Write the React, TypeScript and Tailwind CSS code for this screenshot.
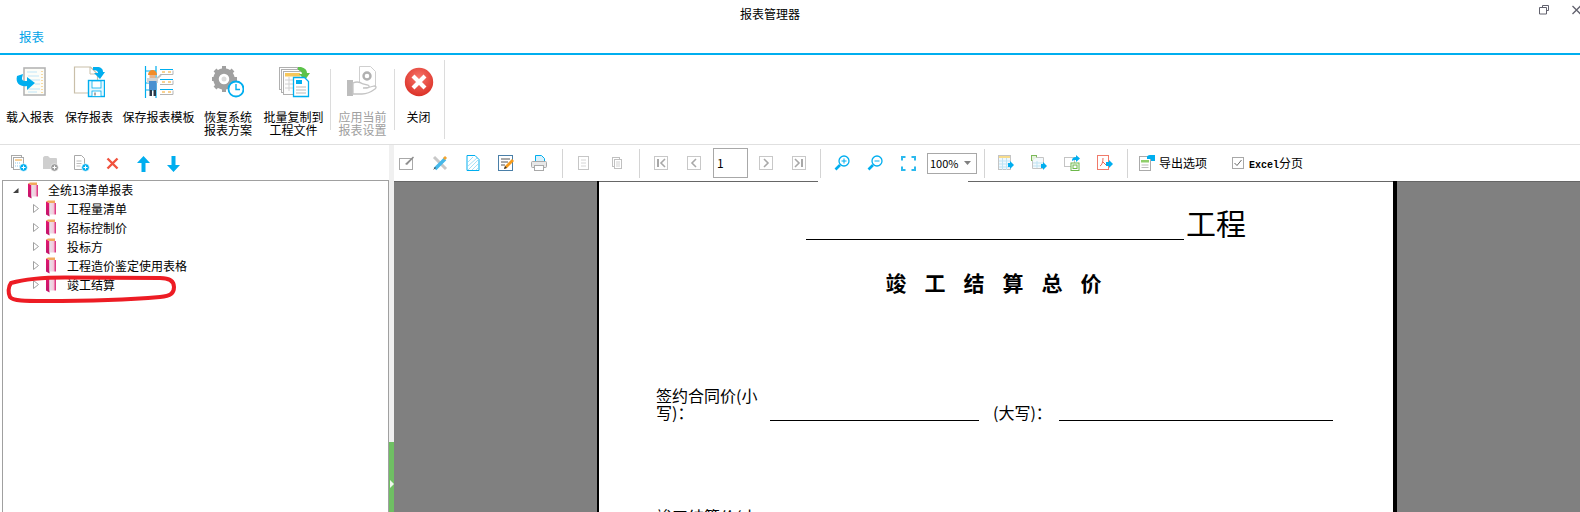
const cn = "#00aeef";
const gr = "#a9a9a9";

const Sep = ({ className = "" }: { className?: string }) => (
  <div className={`w-px h-[29px] bg-[#d4d4d4] ${className}`} />
);

// ribbon icons
const LoadIcon = () => (
  <svg width="32" height="32" viewBox="0 0 32 32">
    <rect x="10" y="2" width="21" height="27" fill="#fdfdf8" stroke="#b5b5b5" strokeWidth="1.600" />
    <path d="M13 6h10M14 10h11M16 14h10M21 18h5M14 23h12M14 26h9" stroke="#bfe6f7" strokeWidth="1.200" />
    <path d="M28 5v22" stroke="#f5b84a" strokeWidth="1" strokeDasharray="1 2" />
    <path d="M3 10l6-2-1 4c0 3 2 3 5 3v-4l8 6-8 7v-4C7 21 1 18 3 10z" fill={cn} />
  </svg>
);
const SaveIcon = () => (
  <svg width="32" height="32" viewBox="0 0 32 32">
    <path d="M1.500 1h16l7 7v19h-23z" fill="#fff" stroke="#c9bfa9" strokeWidth="1.200" />
    <path d="M17 1v7h7" fill="none" stroke="#c9bfa9" />
    <rect x="15.500" y="14.500" width="16" height="16" fill="#e9f8fe" stroke={cn} strokeWidth="1.400" />
    <rect x="19" y="15" width="9" height="7" fill="#fff" stroke={cn} strokeWidth=".8" />
    <rect x="19" y="25" width="9" height="5.500" fill="#fff" stroke={cn} strokeWidth=".8" />
    <rect x="21" y="26.500" width="2" height="3" fill={gr} />
    <path d="M20 1h4c4 0 6 2 6 5h2l-5 7-6-6h4c0-2-2-3-5-3z" fill={cn} />
  </svg>
);
const TemplateIcon = () => (
  <svg width="32" height="32" viewBox="0 0 32 32">
    <path d="M2.500 0v32M13 0v32M2 5h11M2 17h11M2 24h11" stroke={cn} strokeWidth="1.200" />
    <g fill="#fff">
      <path d="M17 3h13v5H17z" />
      <path d="M17 14h13v5H17z" />
      <path d="M17 24h13v5H17z" />
    </g>
    <path d="M17 3.500h13M17 13.500h13M17 23.500h13" stroke={cn} />
    <path d="M17 8.500h13v-4M17 18.500h13v-4M17 28.500h13v-4" fill="none" stroke="#b5b5b5" />
    <path d="M19 6h3M25 6h3M19 16h3M25 16h3M19 26h3M25 26h3" stroke="#f5a623" strokeWidth="1.200" />
    <path d="M12 14l6-5" stroke="#c4c4c4" strokeWidth="2" />
    <path d="M5 9c0-3 2-5 4.500-5S14 6 14 9z" fill="#f28c28" />
    <rect x="6.500" y="9" width="6" height="3" fill="#e8b48a" />
    <rect x="4" y="12" width="11" height="5" fill="#d4d4d4" />
    <rect x="6" y="15" width="7.500" height="9" fill="#4a90d0" />
    <rect x="6.500" y="24" width="2.500" height="6" fill="#2b3a4a" />
    <rect x="10.500" y="24" width="2.500" height="6" fill="#2b3a4a" />
  </svg>
);
const RestoreIcon = () => (
  <svg width="32" height="32" viewBox="0 0 32 32">
    <circle cx="12" cy="13" r="8" fill="none" stroke="#a0a0a0" strokeWidth="5.500" />
    <g stroke="#a0a0a0" strokeWidth="4">
      <path d="M12 0v4M12 22v4M-1 13h4M21 13h4M3 4l3 3M18 19l3 3M21 4l-3 3M6 19l-3 3" />
    </g>
    <circle cx="12" cy="13" r="2.500" fill="#dcdcdc" />
    <circle cx="24" cy="23" r="7.500" fill="#fff" stroke={cn} strokeWidth="1.800" />
    <path d="M24 18v5.500h4" fill="none" stroke={cn} strokeWidth="1.400" />
  </svg>
);
const BatchIcon = () => (
  <svg width="32" height="32" viewBox="0 0 32 32">
    <rect x="1.500" y="1.500" width="18" height="22" fill="#fff" stroke="#b0b0b0" />
    <rect x="3.500" y="3.500" width="18" height="23" fill="#fff" stroke="#b0b0b0" />
    <rect x="5.500" y="5.500" width="19" height="23" fill="#fdfdfd" stroke="#b0b0b0" />
    <rect x="7" y="7" width="15" height="3.500" fill="#f7c75a" />
    <path d="M7 14h14M7 18h10M7 22h8M11 11v14" stroke="#d0d0d0" />
    <path d="M20 1h3c4 1 6 3 6 6h3l-5 7-6-6h3c0-2-2-4-4-4z" fill="#5cc24a" />
    <path d="M15.500 11.500h11l4 4v15h-15z" fill="#fff" stroke={cn} strokeWidth="1.300" />
    <rect x="18" y="14" width="6" height="4" fill={cn} />
    <path d="M18 21h10M18 24h10M18 27h10" stroke="#b9b9b9" />
  </svg>
);
const ApplyIcon = () => (
  <svg width="32" height="32" viewBox="0 0 32 32">
    <path d="M12.500 .5h11l5 5v16h-16z" fill="#fff" stroke="#cfcfcf" />
    <circle cx="20" cy="10" r="3.500" fill="none" stroke="#b0b0b0" strokeWidth="2.400" />
    <rect x="0" y="14" width="6" height="16" fill="#bdbdbd" />
    <path d="M6 17c4-2 7-1 10 1l5 1c2 1 1 3-1 3h-4c3 0 8-1 11-2 2 0 3 1 1 3-4 3-9 5-13 5H6z" fill="#fff" stroke="#c4c4c4" strokeWidth="1.300" />
  </svg>
);
const CloseIcon = () => (
  <svg width="30" height="30" viewBox="0 0 30 30">
    <defs>
      <radialGradient id="closeRed" cx="50%" cy="35%" r="70%">
        <stop offset="0%" stopColor="#f7756b" />
        <stop offset="100%" stopColor="#d92c22" />
      </radialGradient>
    </defs>
    <circle cx="15" cy="15" r="14.200" fill="url(#closeRed)" />
    <path d="M9 9l12 12M21 9L9 21" stroke="#fff" strokeWidth="4.200" />
  </svg>
);

// left toolbar
const PlusBadge = ({ color = cn }: { color?: string }) => (
  <g>
    <circle cx="12.500" cy="12.500" r="3.800" fill={color} stroke="#fff" strokeWidth=".6" />
    <path d="M10.500 12.500h4M12.500 10.500v4" stroke="#fff" />
  </g>
);
const NewGroupIcon = () => (
  <svg width="17" height="17" viewBox="0 0 17 17">
    <rect x=".5" y=".5" width="10" height="12" fill="#fff" stroke={gr} />
    <rect x="2.500" y="2.500" width="10" height="12" fill="#fff" stroke={gr} />
    <path d="M4 5h7" stroke="#f0a030" />
    <path d="M4 8h6M4 11h5" stroke="#8cc8ea" strokeDasharray="1 1" />
    <PlusBadge />
  </svg>
);
const NewFolderIcon = () => (
  <svg width="17" height="17" viewBox="0 0 17 17">
    <path d="M1 3c0-1 1-2 2-2h3l2 2h6c1 0 1 1 1 1v10H1z" fill="#cfcfcf" />
    <PlusBadge color="#9c9c9c" />
  </svg>
);
const NewFileIcon = () => (
  <svg width="17" height="17" viewBox="0 0 17 17">
    <path d="M1.500 .5h7l3 3v11h-10z" fill="#fff" stroke={gr} />
    <path d="M3.500 6h5M3.500 8.500h5M3.500 11h4" stroke="#bcbcbc" />
    <PlusBadge />
  </svg>
);
const XIcon = () => (
  <svg width="13" height="13" viewBox="0 0 13 13">
    <path d="M1.500 1.500l10 10M11.500 1.500l-10 10" stroke="#f0533f" strokeWidth="2.400" />
  </svg>
);
const UpIcon = () => (
  <svg width="15" height="16" viewBox="0 0 15 16">
    <path d="M7.500 0L14 7h-4.500v9h-4V7H1z" fill={cn} />
  </svg>
);
const DownIcon = () => (
  <svg width="15" height="16" viewBox="0 0 15 16">
    <path d="M7.500 16L14 9h-4.500V0h-4v9H1z" fill={cn} />
  </svg>
);

// viewer toolbar
const Ico = ({ children }: { children: React.ReactNode }) => (
  <svg width="16" height="16" viewBox="0 0 16 16">
    {children}
  </svg>
);
const EditIcon = () => (
  <Ico>
    <rect x=".5" y="3.500" width="13" height="11" fill="#fff" stroke={gr} />
    <path d="M6 9l8-7.500 1 1L8 10z" fill="#8f8f8f" />
  </Ico>
);
const ToolIcon = () => (
  <Ico>
    <path d="M2 2l12 12" stroke="#c8c8c8" strokeWidth="3" />
    <path d="M3 14L13 4" stroke="#45b8ea" strokeWidth="3.500" />
    <path d="M12 2l2 2" stroke="#f2a430" strokeWidth="3" />
    <path d="M1 15l2-3 1 1z" fill="#444" />
  </Ico>
);
const HatchIcon = () => (
  <Ico>
    <path d="M2 .5h8l4 4v11H2z" fill="#fff" stroke={cn} />
    <path d="M3 7l5-5M3 11l9-8M3 15l10-10M7 15l6-6M11 15l2-2" stroke="#a6e0f6" />
  </Ico>
);
const NoteIcon = () => (
  <Ico>
    <rect x=".5" y=".5" width="14" height="15" fill="#fff" stroke="#4a7fa8" />
    <path d="M3 4h9M3 7h7M3 10h4" stroke="#555" />
    <path d="M6 14l1-3 7-7 2 2-7 7z" fill="#f59a1b" />
    <path d="M6 14l1-3 2 2z" fill="#333" />
  </Ico>
);
const PrintIcon = () => (
  <Ico>
    <path d="M4.500 .5h6l3 3v6h-9z" fill="#d9f1fb" stroke={cn} />
    <rect x=".5" y="6.500" width="15" height="6" rx="1" fill="#e8e8e8" stroke={gr} />
    <rect x="3.500" y="10.500" width="9" height="5" fill="#fff" stroke={gr} />
  </Ico>
);
const PageIcon = () => (
  <Ico>
    <rect x="2.500" y="1.500" width="10" height="13" fill="#fff" stroke="#c6c6c6" />
    <path d="M5 5h5M5 8h5M5 11h5" stroke="#d6d6d6" />
  </Ico>
);
const PagesIcon = () => (
  <Ico>
    <rect x="3.500" y="2.500" width="7" height="9" fill="#fff" stroke="#c0c0c0" />
    <rect x="5.500" y="4.500" width="7" height="9" fill="#fff" stroke="#c0c0c0" />
    <path d="M7 7h4M7 9h4M7 11h4" stroke="#d0d0d0" />
  </Ico>
);
const NavIcon = ({ d, bar }: { d: string; bar?: number }) => (
  <Ico>
    <rect x="1.500" y="1.500" width="13" height="13" fill="#fff" stroke="#c8c8c8" />
    <path d={d} fill="none" stroke="#a8a8a8" strokeWidth="1.600" />
    {bar !== undefined && <rect x={bar} y="4" width="2" height="8" fill="#a8a8a8" />}
  </Ico>
);
const ZoomIcon = ({ plus }: { plus?: boolean }) => (
  <Ico>
    <circle cx="10" cy="6" r="5" fill="#fff" stroke={cn} strokeWidth="1.300" />
    <path d="M7.500 6h5" stroke={cn} />
    {plus && <path d="M10 3.500v5" stroke={cn} />}
    <path d="M6 10l-4.500 4.500" stroke={cn} strokeWidth="2.600" />
  </Ico>
);
const FitIcon = () => (
  <svg width="15" height="15" viewBox="0 0 15 15">
    <path d="M1 4.500V1h3.500M10.500 1H14v3.500M14 10.500V14h-3.500M4.500 14H1v-3.500" fill="none" stroke="#2bb9ee" strokeWidth="2" />
  </svg>
);
const ExcelIcon = () => (
  <Ico>
    <rect x=".5" y=".5" width="12" height="14" fill="#f0f8fd" stroke="#c4c4c4" />
    <rect x="1" y="1" width="11" height="2" fill="#f7dc8c" />
    <path d="M1 6h11M1 9h11M1 12h11M4.500 3v12M8.500 3v12" stroke="#bfe3f3" />
    <path d="M10 8h2V6l4 4-4 4v-2h-2z" fill={cn} />
  </Ico>
);
const ExcelPageIcon = () => (
  <Ico>
    <rect x=".5" y=".5" width="5" height="5" fill="#e5f2dc" stroke="#7cb95b" />
    <path d="M5.500 2.500h7v11h-11v-8" fill="#f4f9fc" stroke="#c4c4c4" />
    <path d="M2 8h10M2 11h10M6 6v7" stroke="#bfe3f3" />
    <path d="M10 9h2V7l4 4-4 4v-2h-2z" fill={cn} />
  </Ico>
);
const WordIcon = () => (
  <Ico>
    <rect x=".5" y="2.500" width="10" height="9" fill="#fff" stroke="#c4c4c4" />
    <rect x="7" y="8" width="8" height="7.500" fill="#fff" stroke="#6cb84a" />
    <rect x="9" y="10" width="4" height="3.500" fill="none" stroke="#6cb84a" />
    <path d="M8 5c0-2 2-3 4-3V0l4 3.500L12 7V5c-2 0-3 0-4 1z" fill={cn} />
  </Ico>
);
const PdfIcon = () => (
  <Ico>
    <rect x=".5" y=".5" width="11" height="14" fill="#fff" stroke="#f07a6a" />
    <path d="M3 11c2-1 3-4 3-8M6 7l3 3" stroke="#ee6a58" fill="none" />
    <path d="M9 7h3V5l4 4-4 4v-2H9z" fill={cn} />
  </Ico>
);
const OptionIcon = () => (
  <Ico>
    <rect x=".5" y="1.500" width="11" height="14" fill="#fff" stroke="#aaa" />
    <rect x="2" y="5" width="8" height="2.500" fill="#8fce6a" />
    <path d="M2.500 10h7M2.500 12.500h7" stroke="#bbb" />
    <path d="M8 4V2c0-1 1-2 3-2h5v6h-4V4z" fill={cn} />
  </Ico>
);

const Book = () => (
  <svg width="12" height="17" viewBox="0 0 12 17" className="shrink-0">
    <defs>
      <linearGradient id="bookFill" x1="0" x2="1" y1="0" y2="0">
        <stop offset="0%" stopColor="#e4e4ea" />
        <stop offset="60%" stopColor="#f6c9dc" />
        <stop offset="100%" stopColor="#d81b72" />
      </linearGradient>
      <linearGradient id="bookSide" x1="0" x2="0" y1="0" y2="1">
        <stop offset="0%" stopColor="#e2176f" />
        <stop offset="100%" stopColor="#c0146a" />
      </linearGradient>
    </defs>
    <path d="M1 1.500l3.500 1.500v13.500L1 14.500z" fill="url(#bookSide)" />
    <path d="M4.500 3h6.500v11.500H4.500z" fill="url(#bookFill)" />
    <path d="M1 1.500l2-1h7v2.500H4.500z" fill="#f2a85c" />
  </svg>
);

const TreeRow = ({ label, root }: { label: string; root?: boolean }) => (
  <div className={`flex items-center ${root ? "h-[18px] pl-[9px]" : "h-[19px] pl-[29px]"}`}>
    <svg width="8" height="9" viewBox="0 0 8 9" className="shrink-0">
      {root ? (
        <path d="M6.500 2v5H1z" fill="#404040" />
      ) : (
        <path d="M1.500 .5l5 4-5 4z" fill="#fff" stroke="#a0a0a0" />
      )}
    </svg>
    <div className={root ? "ml-[7px]" : "ml-[5px]"}>
      <Book />
    </div>
    <span className={`text-black ${root ? "ml-[9px]" : "ml-[10px]"}`}>{label}</span>
  </div>
);

const RibbonBtn = ({ w, icon, lines, off }: { w: string; icon: React.ReactNode; lines: string[]; off?: boolean }) => (
  <div className={`flex flex-col items-center pt-[11px] ${w}`}>
    <div className="h-[32px] flex items-center">{icon}</div>
    <div className={`mt-[12px] text-center leading-[13px] ${off ? "text-[#a0a0a0]" : "text-black"}`}>
      {lines.map((l) => (
        <div key={l}>{l}</div>
      ))}
    </div>
  </div>
);

const Slot = ({ children }: { children: React.ReactNode }) => (
  <div className="w-[26px] flex justify-center">{children}</div>
);
const Group = ({ children, className = "" }: { children: React.ReactNode; className?: string }) => (
  <div className={`flex items-center gap-[7px] ${className}`}>{children}</div>
);

export default function App() {
  return (
    <div className="relative w-[1580px] h-[512px] overflow-hidden bg-white flex flex-col text-[12px] font-['Noto_Sans_CJK_SC','Liberation_Sans',sans-serif]">
      {/* title bar */}
      <div className="h-[27px] relative flex items-center justify-center text-black">
        <span className="ml-[-40px]">报表管理器</span>
        <div className="absolute right-0 top-[3px] flex items-start">
          <svg width="10" height="10" viewBox="0 0 10 10" className="mr-[23px] mt-[2px]">
            <path d="M3.500 2.500V.5h6v5h-2M.5 2.500h7v6.500h-7z" fill="none" stroke="#62626e" />
          </svg>
          <svg width="8" height="10" viewBox="0 0 8 10" className="mt-[2px]">
            <path d="M.5 1l8 8M8.500 1l-8 8" stroke="#62626e" strokeWidth="1.300" />
          </svg>
        </div>
      </div>

      {/* tab strip */}
      <div className="h-[28px] flex items-start border-b-2 border-[#00aeef]">
        <div className="w-[65px] h-[27px] border-b-[1px] border-[#00aeef] flex justify-center pt-px pr-[2px]">
          <span className="text-[#00a3e8] text-[12.500px]">报表</span>
        </div>
      </div>

      {/* ribbon */}
      <div className="h-[90px] border-b border-[#e0e0e0] flex shrink-0">
        <RibbonBtn w="w-[60px]" icon={<LoadIcon />} lines={["载入报表"]} />
        <RibbonBtn w="w-[58px]" icon={<SaveIcon />} lines={["保存报表"]} />
        <RibbonBtn w="w-[81px]" icon={<TemplateIcon />} lines={["保存报表模板"]} />
        <RibbonBtn w="w-[58px]" icon={<RestoreIcon />} lines={["恢复系统", "报表方案"]} />
        <RibbonBtn w="w-[73px]" icon={<BatchIcon />} lines={["批量复制到", "工程文件"]} />
        <div className="w-px h-[61px] mt-[14px] bg-[#dcdcdc]" />
        <RibbonBtn w="w-[63px]" icon={<ApplyIcon />} lines={["应用当前", "报表设置"]} off />
        <div className="w-px h-[61px] mt-[14px] bg-[#dcdcdc]" />
        <div className="w-[49px] pr-[2px]">
          <RibbonBtn w="w-full" icon={<CloseIcon />} lines={["关闭"]} />
        </div>
        <div className="w-px h-[79px] mt-[5px] bg-[#dcdcdc]" />
      </div>

      {/* body */}
      <div className="flex-1 flex min-h-0">
        <div className="w-[389px] flex flex-col shrink-0">
          <div className="h-[35px] flex items-center pl-[11px] pt-[2px] gap-[14px] shrink-0">
            <NewGroupIcon />
            <NewFolderIcon />
            <NewFileIcon />
            <div className="ml-[2px] mr-[3px]">
              <XIcon />
            </div>
            <UpIcon />
            <div className="ml-[1px]">
              <DownIcon />
            </div>
          </div>
          <div className="flex-1 ml-[2px] border border-[#a0a0a0] border-b-0">
            <TreeRow root label="全统13清单报表" />
            <TreeRow label="工程量清单" />
            <TreeRow label="招标控制价" />
            <TreeRow label="投标方" />
            <TreeRow label="工程造价鉴定使用表格" />
            <TreeRow label="竣工结算" />
          </div>
        </div>

        {/* splitter */}
        <div className="w-[5px] shrink-0 flex flex-col bg-[#f0f0f0] relative">
          <div className="flex-1" />
          <div className="h-[70px] bg-[#6fbf63] relative">
            <svg width="4" height="8" viewBox="0 0 4 8" className="absolute left-[1px] top-[38px]">
              <path d="M0 0l4 4-4 4z" fill="#eef8ec" />
            </svg>
          </div>
        </div>

        {/* report viewer */}
        <div className="flex-1 flex flex-col min-w-0">
          <div className="h-[36px] flex items-center shrink-0">
            <Group>
              <Slot><EditIcon /></Slot>
              <Slot><ToolIcon /></Slot>
              <Slot><HatchIcon /></Slot>
              <Slot><NoteIcon /></Slot>
              <Slot><PrintIcon /></Slot>
            </Group>
            <Sep className="ml-[10px]" />
            <Group className="ml-[8px]">
              <Slot><PageIcon /></Slot>
              <Slot><PagesIcon /></Slot>
            </Group>
            <Sep className="ml-[9px]" />
            <Group className="ml-[8px]">
              <Slot><NavIcon d="M12 4L8 8l4 4" bar={4} /></Slot>
              <Slot><NavIcon d="M10 4L6 8l4 4" /></Slot>
            </Group>
            <div className="ml-[6px] w-[35px] h-[30px] border border-[#a8a8a8] flex items-center pl-[3px] text-black">1</div>
            <Group className="ml-[5px]">
              <Slot><NavIcon d="M6 4l4 4-4 4" /></Slot>
              <Slot><NavIcon d="M4 4l4 4-4 4" bar={10} /></Slot>
            </Group>
            <Sep className="ml-[8px]" />
            <Group className="ml-[8px]">
              <Slot><ZoomIcon plus /></Slot>
              <Slot><ZoomIcon /></Slot>
              <Slot><FitIcon /></Slot>
            </Group>
            <div className="ml-[6px] w-[50px] h-[21px] border border-[#a8a8a8] flex items-center justify-between pl-[2px] pr-[5px] text-black text-[11px]">
              <span>100%</span>
              <svg width="7" height="4" viewBox="0 0 7 4">
                <path d="M0 0h7L3.500 4z" fill="#808080" />
              </svg>
            </div>
            <Sep className="ml-[7px]" />
            <Group className="ml-[8px]">
              <Slot><ExcelIcon /></Slot>
              <Slot><ExcelPageIcon /></Slot>
              <Slot><WordIcon /></Slot>
              <Slot><PdfIcon /></Slot>
            </Group>
            <Sep className="ml-[9px]" />
            <div className="ml-[11px]"><OptionIcon /></div>
            <span className="ml-[4px] text-black">导出选项</span>
            <div className="ml-[25px] w-[12px] h-[12px] border border-[#a8a8a8] flex items-center justify-center">
              <svg width="8" height="8" viewBox="0 0 8 8">
                <path d="M.5 4l2.500 2.500L7.500 1" fill="none" stroke="#666" />
              </svg>
            </div>
            <span className="ml-[5px] text-black">
              <span className="font-['Liberation_Mono',monospace] font-bold text-[10px]">Excel</span>分页
            </span>
          </div>

          {/* preview area */}
          <div className="flex-1 flex bg-[#808080] min-h-0 border-t border-[#666666]">
            <div className="ml-[203px] w-[800px] bg-white border-l-2 border-r-4 border-black overflow-hidden -mt-px relative z-10 text-black">
              <div className="flex h-px">
                <div className="w-[219px] bg-[#666666]" />
                <div className="flex-1" />
                <div className="w-[425px] bg-[#666666]" />
              </div>
              <div className="pl-[207px] pt-[23px] flex items-end h-[58px]">
                <div className="w-[378px] border-b border-black" />
                <span className="text-[30px] leading-[34px] ml-[2px] mb-[1px]">工程</span>
              </div>
              <div className="mt-[28px] text-center font-bold text-[21px] leading-[28px] tracking-[18px] pl-[13px]">竣工结算总价</div>
              <div className="mt-[91px] ml-[57px] flex items-end">
                <div className="w-[110px] text-[16px] leading-[17px]">签约合同价(小写)：</div>
                <div className="ml-[4px] w-[209px] border-b border-black" />
                <span className="ml-[14px] text-[16px] leading-[17px]">(大写)：</span>
                <div className="ml-[7px] w-[274px] border-b border-black" />
              </div>
              <div className="mt-[85px] ml-[57px] text-[16px] leading-[20px]">竣工结算价(小</div>
            </div>
          </div>
        </div>
      </div>

      {/* red marker drawn over the tree */}
      <svg width="172" height="32" viewBox="0 0 172 32" className="absolute left-[5px] top-[274px]">
        <path
          d="M6 9C20 5 40 3.500 60 3.500L155 4C165 4 169 7 169 13C169 19 166 22 155 23C120 26 80 27 40 27C20 27 8 27 5 23C3 19 3 13 6 9Z"
          fill="none"
          stroke="#ed1c24"
          strokeWidth="4"
        />
      </svg>
    </div>
  );
}
